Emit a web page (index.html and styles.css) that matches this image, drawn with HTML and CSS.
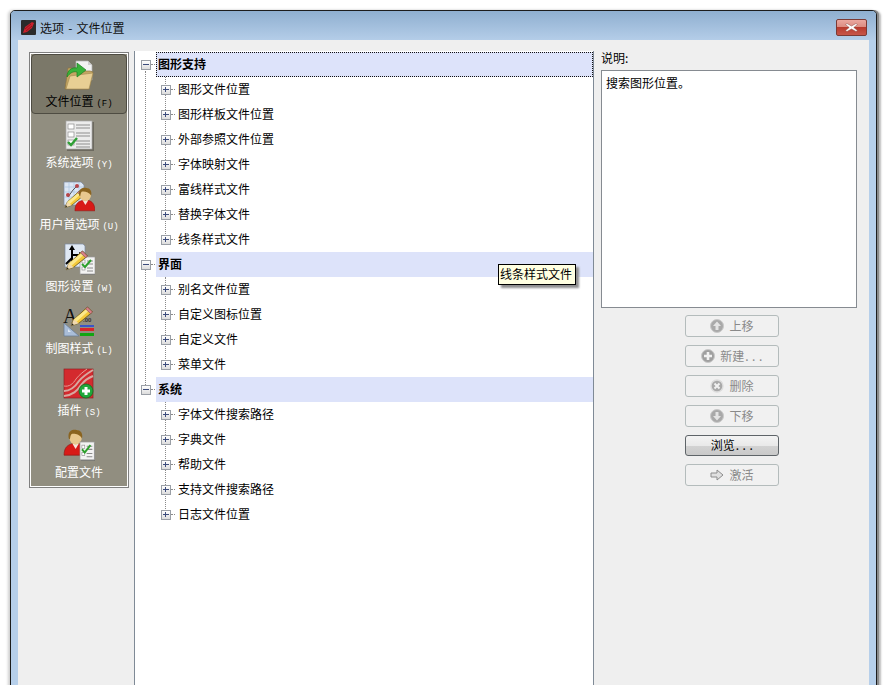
FILE: index.html
```html
<!DOCTYPE html>
<html lang="zh-CN">
<head>
    <meta charset="UTF-8">
    <title>选项 - 文件位置</title>
    <link rel="stylesheet" href="styles.css">
</head>
<body>
    <svg class="defs" width="0" height="0">
        <defs>
            <g id="pencil">
                <path d="M1 15 L3 10 L14 0 L18 4 L7 13 Z" fill="#f4c93a" stroke="#6b5a1e" stroke-width=".7"/>
                <path d="M3 10 L14 1 L15.5 2.5 L5 12 Z" fill="#fbe88c"/>
                <path d="M14 0 L18 4 L16.5 5.4 L12.4 1.4 Z" fill="#d9808a" stroke="#7c4a4a" stroke-width=".5"/>
                <path d="M1 15 L3 10 L7 13 Z" fill="#f0d9b0"/>
                <path d="M1 15 L1.8 13 L3 14.2 Z" fill="#222"/>
            </g>
            <g id="person">
                <path d="M1 24 C1 16 5 14 9 13 L15 13 C19 14 22 17 22 24 Z" fill="#d81a17" stroke="#8d1512" stroke-width=".6"/>
                <path d="M9 13 L12 18 L15 13 Z" fill="#f5e6dd"/>
                <ellipse cx="12" cy="7" rx="6" ry="7" fill="#e8c88e"/>
                <path d="M5.5 8 C4 1 9 -1 13 0 C18 0 19 5 18 8 C16 4 10 3 8 4 C7 5 7 7 6.5 9 Z" fill="#8a6420"/>
            </g>
            <g id="checksheet">
                <rect x="1" y="1" width="16" height="18" fill="#5f5f5f" opacity=".55"/>
                <rect width="15" height="17" fill="#f3f3f3" stroke="#9a9a9a" stroke-width=".7"/>
                <rect x="2" y="3" width="3" height="3" fill="#fff" stroke="#888" stroke-width=".6"/>
                <rect x="2" y="10" width="3" height="3" fill="#fff" stroke="#888" stroke-width=".6"/>
                <path d="M7 4 H13 M7 7 H13 M7 11 H13 M7 14 H13" stroke="#8a8a8a" stroke-width="1"/>
                <path d="M2 7 L5 10 L11 3" fill="none" stroke="#2ca02c" stroke-width="2"/>
            </g>
        </defs>
    </svg>

    <div class="window">
        <div class="titlebar">
            <svg class="app-icon" width="15" height="15" viewBox="0 0 15 15">
                <rect width="15" height="15" rx="1" fill="#2b2b2b"/>
                <path d="M2 13 L4 7 L11 2 L13 3 L11 8 L6 12 Z" fill="#c8202c"/>
                <path d="M4 9 L10 4 M5 11 L11 6" stroke="#8d1018" stroke-width=".8"/>
            </svg>
            <span class="title">选项 - 文件位置</span>
            <div class="close-btn">
                <svg width="13" height="9" viewBox="0 0 13 9">
                    <path d="M2 0.5 L6.5 3 L11 0.5 L12.5 1.5 L8.8 4.5 L12.5 7.5 L11 8.5 L6.5 6 L2 8.5 L0.5 7.5 L4.2 4.5 L0.5 1.5 Z" fill="#fff" stroke="#8a4a44" stroke-width=".5"/>
                </svg>
            </div>
        </div>

        <div class="content">
            <div class="sidebar">
                <div class="nav-item active">
                    <svg class="nav-icon" width="32" height="32" viewBox="0 0 32 32">
                        <path d="M13 1 H25 L29 5 V20 H13 Z" fill="#f2f2f2" stroke="#b0b0b0" stroke-width=".7"/>
                        <path d="M25 1 V5 H29 Z" fill="#cfcfcf"/>
                        <path d="M5 8 L9 8 L11 11 L27 11 L30 12 L26 29 L2 29 Z" fill="#c5a663" stroke="#8c7440" stroke-width=".7"/>
                        <path d="M7 16 L30 13 L26 29 L3 29 Z" fill="#e8cf94" stroke="#a08850" stroke-width=".6"/>
                        <path d="M4 17 C4 10 9 7 14 8 L14 3 L23 10 L14 17 L14 12 C10 11 7 13 4 17 Z" fill="#38b23a" stroke="#1c7f22" stroke-width=".7"/>
                    </svg>
                    <span class="nav-label">文件位置<span class="key">(F)</span></span>
                </div>
                <div class="nav-item">
                    <svg class="nav-icon" width="32" height="32" viewBox="0 0 32 32">
                        <rect x="4" y="3" width="27" height="29" fill="#5c5a50" opacity=".7"/>
                        <rect x="3" y="2" width="26" height="28" fill="#ececec" stroke="#a8a8a8" stroke-width=".7"/>
                        <rect x="5" y="5" width="6" height="5" fill="#fff" stroke="#8c8c8c" stroke-width=".7"/>
                        <rect x="5" y="13" width="6" height="5" fill="#fff" stroke="#8c8c8c" stroke-width=".7"/>
                        <rect x="5" y="21" width="6" height="5" fill="#fff" stroke="#8c8c8c" stroke-width=".7"/>
                        <path d="M13 6 H27 M13 9 H27 M13 14 H27 M13 17 H27 M13 22 H27 M13 25 H27 M13 28 H27" stroke="#8e8e8e" stroke-width="1"/>
                        <path d="M5 23 L8 26 L14 19" fill="none" stroke="#2e9f35" stroke-width="2.4"/>
                    </svg>
                    <span class="nav-label">系统选项<span class="key">(Y)</span></span>
                </div>
                <div class="nav-item">
                    <svg class="nav-icon" width="32" height="32" viewBox="0 0 32 32">
                        <path d="M1 1 H18 L21 4 V24 H1 Z" fill="#dce6f4" stroke="#7d8ba0" stroke-width=".7"/>
                        <path d="M1 6 H21 M1 11 H21 M1 16 H21 M6 1 V24 M11 1 V24 M16 1 V24" stroke="#a9c3e0" stroke-width=".7"/>
                        <path d="M5 16 L10 9 L15 4" fill="none" stroke="#333" stroke-width=".8"/>
                        <circle cx="5" cy="14" r="2" fill="#b5454a"/>
                        <circle cx="14" cy="5" r="2" fill="#b5454a"/>
                        <use href="#pencil" transform="translate(1 10) scale(1.1)"/>
                        <use href="#person" transform="translate(11 7) scale(.95)"/>
                    </svg>
                    <span class="nav-label">用户首选项<span class="key">(U)</span></span>
                </div>
                <div class="nav-item">
                    <svg class="nav-icon" width="32" height="32" viewBox="0 0 32 32">
                        <path d="M2 1 H20 L22 3 V24 H2 Z" fill="#dfe8f3" stroke="#7d8ba0" stroke-width=".7"/>
                        <path d="M9 19 V7 M9 12 H19 M3 21 L9 15" stroke="#000" stroke-width="2"/>
                        <path d="M9 2 L6 7 H12 Z M21 12 L16 9 V15 Z" fill="#000"/>
                        <use href="#checksheet" transform="translate(17 14)"/>
                        <use href="#pencil" transform="translate(2 8) scale(1.25)"/>
                    </svg>
                    <span class="nav-label">图形设置<span class="key">(W)</span></span>
                </div>
                <div class="nav-item">
                    <svg class="nav-icon" width="32" height="32" viewBox="0 0 32 32">
                        <path d="M1 31 V18 L16 31 Z" fill="#a9bdd8" stroke="#6b7d96" stroke-width=".8"/>
                        <path d="M5 27 V24 L8 27 Z" fill="#dfe8f3"/>
                        <text class="icon-a" x="0" y="18">A</text>
                        <text class="icon-num" x="20" y="17">.00</text>
                        <use href="#pencil" transform="translate(7 2) scale(1.25)"/>
                        <rect x="17" y="20" width="14" height="2" fill="#3a55c8"/>
                        <rect x="17" y="23" width="14" height="3" fill="#d8242a"/>
                        <rect x="17" y="28" width="14" height="3" fill="#12a512"/>
                    </svg>
                    <span class="nav-label">制图样式<span class="key">(L)</span></span>
                </div>
                <div class="nav-item">
                    <svg class="nav-icon" width="32" height="32" viewBox="0 0 32 32">
                        <rect x="1" y="2" width="29" height="29" fill="#d42a2e" stroke="#8c2224" stroke-width=".7"/>
                        <path d="M1 24 C8 24 12 20 16 14 C20 9 25 6 30 3 M1 29 C10 28 14 24 18 18 C21 14 25 11 30 9" fill="none" stroke="#d8a8a0" stroke-width="2"/>
                        <path d="M1 19 C6 20 10 17 13 12 C16 8 20 5 24 2" fill="none" stroke="#e69a94" stroke-width="1"/>
                        <circle cx="23" cy="24" r="7" fill="#1fa83a" stroke="#0f6f24" stroke-width=".8"/>
                        <path d="M23 20 V28 M19 24 H27" stroke="#fff" stroke-width="3"/>
                    </svg>
                    <span class="nav-label">插件<span class="key">(S)</span></span>
                </div>
                <div class="nav-item">
                    <svg class="nav-icon" width="32" height="32" viewBox="0 0 32 32">
                        <use href="#person" transform="translate(0 1) scale(1.05)"/>
                        <use href="#checksheet" transform="translate(17 13) scale(.95 1.05)"/>
                    </svg>
                    <span class="nav-label">配置文件</span>
                </div>
            </div>

            <div class="tree">
                <div class="tree-group">
                    <div class="tree-root selected">
                        <span class="expander minus"></span>
                        <span class="root-label">图形支持</span>
                    </div>
                    <div class="tree-children">
                        <div class="tree-row"><span class="expander plus"></span><span class="row-label">图形文件位置</span></div>
                        <div class="tree-row"><span class="expander plus"></span><span class="row-label">图形样板文件位置</span></div>
                        <div class="tree-row"><span class="expander plus"></span><span class="row-label">外部参照文件位置</span></div>
                        <div class="tree-row"><span class="expander plus"></span><span class="row-label">字体映射文件</span></div>
                        <div class="tree-row"><span class="expander plus"></span><span class="row-label">富线样式文件</span></div>
                        <div class="tree-row"><span class="expander plus"></span><span class="row-label">替换字体文件</span></div>
                        <div class="tree-row"><span class="expander plus"></span><span class="row-label">线条样式文件</span></div>
                    </div>
                </div>
                <div class="tree-group">
                    <div class="tree-root">
                        <span class="expander minus"></span>
                        <span class="root-label">界面</span>
                    </div>
                    <div class="tree-children">
                        <div class="tree-row"><span class="expander plus"></span><span class="row-label">别名文件位置</span></div>
                        <div class="tree-row"><span class="expander plus"></span><span class="row-label">自定义图标位置</span></div>
                        <div class="tree-row"><span class="expander plus"></span><span class="row-label">自定义文件</span></div>
                        <div class="tree-row"><span class="expander plus"></span><span class="row-label">菜单文件</span></div>
                    </div>
                </div>
                <div class="tree-group">
                    <div class="tree-root">
                        <span class="expander minus"></span>
                        <span class="root-label">系统</span>
                    </div>
                    <div class="tree-children">
                        <div class="tree-row"><span class="expander plus"></span><span class="row-label">字体文件搜索路径</span></div>
                        <div class="tree-row"><span class="expander plus"></span><span class="row-label">字典文件</span></div>
                        <div class="tree-row"><span class="expander plus"></span><span class="row-label">帮助文件</span></div>
                        <div class="tree-row"><span class="expander plus"></span><span class="row-label">支持文件搜索路径</span></div>
                        <div class="tree-row"><span class="expander plus"></span><span class="row-label">日志文件位置</span></div>
                    </div>
                </div>
                <div class="tooltip">线条样式文件</div>
            </div>

            <div class="side-panel">
                <div class="desc-label">说明:</div>
                <div class="desc-box">搜索图形位置。</div>
                <div class="actions">
                    <div class="btn">
                        <svg width="14" height="14" viewBox="0 0 14 14"><circle cx="7" cy="7" r="6.5" fill="#a9a9a9" stroke="#c9c9c9"/><path d="M7 2.5 L11 7 H8.5 V11 H5.5 V7 H3 Z" fill="#e4e4e4"/></svg>
                        <span class="btn-text">上移</span>
                    </div>
                    <div class="btn">
                        <svg width="14" height="14" viewBox="0 0 14 14"><circle cx="7" cy="7" r="6.5" fill="#a0a0a0" stroke="#c9c9c9"/><path d="M7 3 V11 M3 7 H11" stroke="#f2f2f2" stroke-width="2.6"/></svg>
                        <span class="btn-text">新建<span class="dots">...</span></span>
                    </div>
                    <div class="btn">
                        <svg width="14" height="14" viewBox="0 0 14 14"><circle cx="7" cy="7" r="6" fill="#a9a9a9" stroke="#dcdcdc" stroke-width="1.4"/><path d="M4.5 4.5 L9.5 9.5 M9.5 4.5 L4.5 9.5" stroke="#f0f0f0" stroke-width="2"/></svg>
                        <span class="btn-text">删除</span>
                    </div>
                    <div class="btn">
                        <svg width="14" height="14" viewBox="0 0 14 14"><circle cx="7" cy="7" r="6.5" fill="#a9a9a9" stroke="#c9c9c9"/><path d="M7 11.5 L11 7 H8.5 V3 H5.5 V7 H3 Z" fill="#e4e4e4"/></svg>
                        <span class="btn-text">下移</span>
                    </div>
                    <div class="btn default">
                        <span class="btn-text">浏览<span class="dots">...</span></span>
                    </div>
                    <div class="btn">
                        <svg width="14" height="12" viewBox="0 0 14 12"><path d="M1 4 H7 V1 L13 6 L7 11 V8 H1 Z" fill="#e0e0e0" stroke="#8c8c8c"/></svg>
                        <span class="btn-text">激活</span>
                    </div>
                </div>
            </div>
        </div>
    </div>
</body>
</html>
```

FILE: styles.css
```css
html, body {
    height: 100%;
}

body {
    margin: 0;
    background: #fff;
    font-family: "Noto Sans CJK SC", "Liberation Sans", sans-serif;
    font-size: 12px;
    color: #000;
    overflow: hidden;
}

.defs {
    position: absolute;
}

.window {
    box-sizing: border-box;
    width: 867px;
    height: 720px;
    margin: 10px 0 0 10px;
    background: #b6cfea;
    border: 1px solid #1c1c1c;
    border-radius: 5px 5px 0 0;
    box-shadow: 2px 0 0 #8a8a8a, 4px 1px 2px #bdbdbd, -2px 0 3px #cfcfcf;
    padding: 0 7px;
}

.titlebar {
    display: flex;
    align-items: center;
    box-sizing: border-box;
    height: 29px;
    margin: 0 -7px;
    padding: 4px 9px 0 10px;
    background: linear-gradient(#8fafd0, #b4cde8);
    border-radius: 4px 4px 0 0;
}

.app-icon {
    margin-right: 4px;
}

.title {
    flex: 1;
    color: #111;
    line-height: 16px;
    word-spacing: 1.5px;
}

.close-btn {
    display: flex;
    align-items: center;
    justify-content: center;
    box-sizing: border-box;
    width: 31px;
    height: 17px;
    border: 1px solid #7c3a34;
    border-radius: 2px;
    background: linear-gradient(#eba79f 0%, #dc8d83 45%, #b83b2e 50%, #c7564a 100%);
}

.content {
    display: flex;
    align-items: flex-start;
    height: 690px;
    background: #efefef;
    padding: 11px 0 0 11px;
}

.sidebar {
    box-sizing: border-box;
    flex: none;
    width: 100px;
    height: 436px;
    margin-top: 1px;
    background: #918e80;
    border: 1px solid #7f7f7f;
    outline: 1px solid #fff;
    outline-offset: -2px;
    padding: 1px;
}

.nav-item {
    display: flex;
    flex-direction: column;
    align-items: center;
    height: 62px;
    padding-top: 5px;
    box-sizing: border-box;
    color: #fff;
}

.nav-item.active {
    height: 60px;
    background: #7b7869;
    border: 1px solid #4e4c42;
    border-radius: 4px;
    color: #000;
}

.nav-icon {
    flex: none;
}

.nav-label {
    margin-top: 3px;
    line-height: 16px;
    white-space: nowrap;
}

.active .nav-label {
    margin-top: 1px;
}

.key {
    margin-left: 3px;
    font-size: 9px;
    font-family: "Liberation Mono", monospace;
}

.icon-a {
    font-family: "Liberation Serif", serif;
    font-size: 20px;
    fill: #111;
}

.icon-num {
    font-family: "Liberation Sans", sans-serif;
    font-size: 6px;
    font-weight: bold;
    fill: #333;
}

.tree {
    position: relative;
    box-sizing: border-box;
    flex: none;
    width: 460px;
    height: 690px;
    margin-left: 5px;
    padding-top: 1px;
    background: #fff;
    border-left: 1px solid #7f8a96;
    border-right: 1px solid #7f8a96;
}

/* vertical dotted line joining the three root rows */
.tree::before {
    content: "";
    position: absolute;
    left: 10px;
    top: 20px;
    height: 320px;
    border-left: 1px dotted #8a8a8a;
}

.tree-root {
    position: relative;
    display: flex;
    align-items: center;
    height: 25px;
    padding-left: 6px;
    font-weight: bold;
}

.tree-root::after {
    content: "";
    position: absolute;
    left: 16px;
    top: 12px;
    width: 4px;
    border-top: 1px dotted #8a8a8a;
}

.root-label {
    flex: 1;
    box-sizing: border-box;
    height: 25px;
    margin-left: 5px;
    padding-left: 2px;
    line-height: 23px;
    background: #dde3fa;
}

.tree-root.selected .root-label {
    outline: 1px dotted #111;
    outline-offset: -1px;
}

.tree-children {
    position: relative;
}

.tree-children::before {
    content: "";
    position: absolute;
    left: 30px;
    top: 0;
    bottom: 12px;
    border-left: 1px dotted #8a8a8a;
}

.tree-row {
    position: relative;
    display: flex;
    align-items: center;
    height: 25px;
    padding-left: 26px;
}

.tree-row::after {
    content: "";
    position: absolute;
    left: 36px;
    top: 12px;
    width: 4px;
    border-top: 1px dotted #8a8a8a;
}

.row-label {
    margin: 0 0 2px 7px;
    line-height: 21px;
}

.expander {
    position: relative;
    z-index: 1;
    flex: none;
    box-sizing: border-box;
    width: 10px;
    height: 10px;
    background: linear-gradient(#fff, #dcdcdc);
    border: 1px solid #9a9fa6;
}

.expander::before,
.plus::after {
    content: "";
    position: absolute;
    background: #3c4c7c;
}

.expander::before {
    left: 1px;
    top: 3px;
    width: 6px;
    height: 1px;
}

.plus::after {
    left: 3px;
    top: 1px;
    width: 1px;
    height: 5px;
}

.tooltip {
    position: absolute;
    left: 363px;
    top: 213px;
    padding: 0 3px 2px 1px;
    line-height: 17px;
    white-space: nowrap;
    background: #ffffe1;
    border: 1px solid #000;
    box-shadow: 3px 3px 2px #8f8f8f;
}

.side-panel {
    flex: none;
    width: 256px;
    margin-left: 7px;
}

.desc-label {
    height: 19px;
    line-height: 14px;
}

.desc-box {
    box-sizing: border-box;
    height: 238px;
    padding: 4px;
    line-height: 16px;
    background: #fff;
    border: 1px solid #868b91;
}

.actions {
    display: flex;
    flex-direction: column;
    align-items: center;
    gap: 8px;
    margin: 7px 0 0 6px;
}

.btn {
    display: flex;
    align-items: center;
    justify-content: center;
    gap: 5px;
    box-sizing: border-box;
    width: 94px;
    height: 22px;
    color: #8a8a8a;
    background: #f1f1f1;
    border: 1px solid #b4bcbc;
    border-radius: 3px;
}

.btn-text {
    margin-bottom: 2px;
    white-space: nowrap;
}

.btn.default {
    height: 21px;
    color: #000;
    background: linear-gradient(#f3f3f3 0%, #e9e9e9 50%, #d2d2d2 52%, #c9c9c9 100%);
    border-color: #5e6468;
}

.dots {
    margin: 0 -3px 0 1px;
    letter-spacing: 3.5px;
}
```
